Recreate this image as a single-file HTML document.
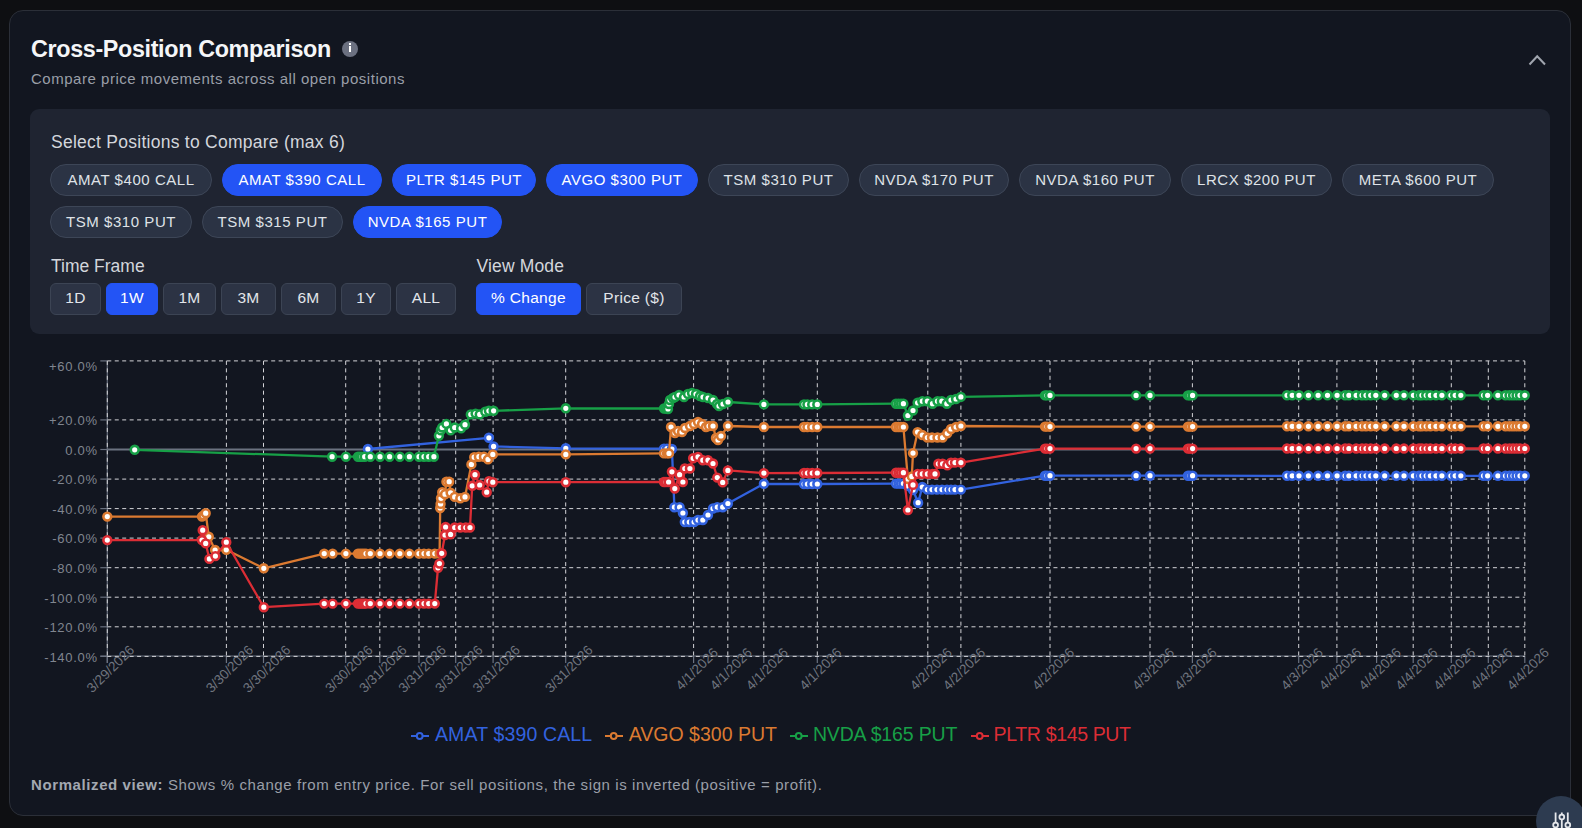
<!DOCTYPE html>
<html><head><meta charset="utf-8">
<style>
*{box-sizing:border-box;margin:0;padding:0}
html,body{width:1582px;height:828px;overflow:hidden;background:#0e0f12;font-family:"Liberation Sans",sans-serif}
.card{position:absolute;left:9px;top:10px;width:1562px;height:806px;background:#121620;border:1px solid #2b2f38;border-radius:14px}
.title{position:absolute;left:31px;top:34px;font-size:23.3px;font-weight:bold;color:#f5f6f8;letter-spacing:-0.33px;white-space:nowrap;line-height:30px}
.info{position:absolute;left:341.7px;top:40.7px;width:16.6px;height:16.6px;border-radius:50%;background:#6b7080}
.info:before{content:"";position:absolute;left:7.3px;top:2.1px;width:2px;height:2px;background:#fff}
.info:after{content:"";position:absolute;left:7.3px;top:5.3px;width:2px;height:6.2px;background:#fff}
.sub{position:absolute;left:31px;top:69px;font-size:15px;color:#9a9fa8;letter-spacing:0.52px;white-space:nowrap;line-height:20px}
.chev{position:absolute;left:1527px;top:52px}
.panel{position:absolute;left:30px;top:109px;width:1520px;height:225px;background:#1f2431;border-radius:9px}
.lbl{position:absolute;font-size:17.5px;color:#d3d6dc;letter-spacing:0.26px;white-space:nowrap;line-height:22px}
.chip{position:absolute;border-radius:16px;background:#2b3344;border:1px solid #3d4657;color:#dfe2e7;font-size:15px;letter-spacing:0.55px;
  display:flex;align-items:center;justify-content:center;white-space:nowrap;padding-bottom:2px}
.chip.sel{background:#2354f5;border-color:#2354f5;color:#fff}
.btn{position:absolute;border-radius:6px;background:#2c3344;border:1px solid #3c4454;color:#e2e5ea;font-size:15.5px;letter-spacing:0.3px;
  display:flex;align-items:center;justify-content:center;white-space:nowrap;padding-bottom:2px}
.btn.sel{background:#2354f5;border-color:#2354f5;color:#fff}
.chart{position:absolute;left:0;top:0}
.li{position:absolute;top:728.8px}
.lt{position:absolute;top:721.8px;font-size:19.5px;line-height:24px;white-space:nowrap}
.foot{position:absolute;left:31px;top:775px;font-size:15px;color:#9a9fa8;letter-spacing:0.6px;white-space:nowrap;line-height:20px}
.foot b{color:#a3a8b1}
.fab{position:absolute;left:1536px;top:796px;width:50px;height:50px;border-radius:50%;background:#2d3b50}
</style></head><body>
<div class="card"></div>
<div class="title">Cross-Position Comparison</div>
<div class="info"></div>
<div class="sub">Compare price movements across all open positions</div>
<svg class="chev" width="22" height="16" viewBox="0 0 22 16"><polyline points="2.5,12.5 10.2,4.2 18,12.5" fill="none" stroke="#a0a5ae" stroke-width="2"/></svg>
<div class="panel"></div>
<div class="lbl" style="left:51px;top:131px">Select Positions to Compare (max 6)</div>
<div class="chip" style="left:50px;top:164px;width:162px;height:32px">AMAT &#36;400 CALL</div><div class="chip sel" style="left:222px;top:164px;width:160px;height:32px">AMAT &#36;390 CALL</div><div class="chip sel" style="left:392px;top:164px;width:144px;height:32px">PLTR &#36;145 PUT</div><div class="chip sel" style="left:546px;top:164px;width:152px;height:32px">AVGO &#36;300 PUT</div><div class="chip" style="left:708px;top:164px;width:141px;height:32px">TSM &#36;310 PUT</div><div class="chip" style="left:859px;top:164px;width:150px;height:32px">NVDA &#36;170 PUT</div><div class="chip" style="left:1019px;top:164px;width:152px;height:32px">NVDA &#36;160 PUT</div><div class="chip" style="left:1181px;top:164px;width:151px;height:32px">LRCX &#36;200 PUT</div><div class="chip" style="left:1342px;top:164px;width:152px;height:32px">META &#36;600 PUT</div>
<div class="chip" style="left:50px;top:206px;width:142px;height:32px">TSM &#36;310 PUT</div><div class="chip" style="left:202px;top:206px;width:141px;height:32px">TSM &#36;315 PUT</div><div class="chip sel" style="left:353px;top:206px;width:149px;height:32px">NVDA &#36;165 PUT</div>
<div class="lbl" style="left:51px;top:254.7px;letter-spacing:0px">Time Frame</div>
<div class="lbl" style="left:476.5px;top:254.7px;letter-spacing:0.15px">View Mode</div>
<div class="btn" style="left:50px;top:283px;width:51px;height:32px">1D</div><div class="btn sel" style="left:106px;top:283px;width:52px;height:32px">1W</div><div class="btn" style="left:163px;top:283px;width:53px;height:32px">1M</div><div class="btn" style="left:221px;top:283px;width:55px;height:32px">3M</div><div class="btn" style="left:281px;top:283px;width:55px;height:32px">6M</div><div class="btn" style="left:341px;top:283px;width:50px;height:32px">1Y</div><div class="btn" style="left:396px;top:283px;width:60px;height:32px">ALL</div><div class="btn sel" style="left:476px;top:283px;width:105px;height:32px">% Change</div><div class="btn" style="left:586px;top:283px;width:96px;height:32px">Price (&#36;)</div>
<svg class="chart" width="1582" height="828" viewBox="0 0 1582 828"><g stroke="#6b7280" stroke-width="1.2"><line x1="107.3" y1="360.9" x2="107.3" y2="663.0"/><line x1="100.3" y1="656.0" x2="1524.8" y2="656.0"/><line x1="100.3" y1="360.9" x2="107.3" y2="360.9"/><line x1="100.3" y1="419.9" x2="107.3" y2="419.9"/><line x1="100.3" y1="479.1" x2="107.3" y2="479.1"/><line x1="100.3" y1="508.6" x2="107.3" y2="508.6"/><line x1="100.3" y1="538.1" x2="107.3" y2="538.1"/><line x1="100.3" y1="567.7" x2="107.3" y2="567.7"/><line x1="100.3" y1="597.2" x2="107.3" y2="597.2"/><line x1="100.3" y1="626.8" x2="107.3" y2="626.8"/><line x1="100.3" y1="656.4" x2="107.3" y2="656.4"/><line x1="100.3" y1="449.5" x2="107.3" y2="449.5"/><line x1="107.3" y1="656.0" x2="107.3" y2="663.0"/><line x1="226.4" y1="656.0" x2="226.4" y2="663.0"/><line x1="263.5" y1="656.0" x2="263.5" y2="663.0"/><line x1="345.7" y1="656.0" x2="345.7" y2="663.0"/><line x1="379.8" y1="656.0" x2="379.8" y2="663.0"/><line x1="419.0" y1="656.0" x2="419.0" y2="663.0"/><line x1="455.7" y1="656.0" x2="455.7" y2="663.0"/><line x1="493.1" y1="656.0" x2="493.1" y2="663.0"/><line x1="565.7" y1="656.0" x2="565.7" y2="663.0"/><line x1="693.6" y1="656.0" x2="693.6" y2="663.0"/><line x1="727.8" y1="656.0" x2="727.8" y2="663.0"/><line x1="763.8" y1="656.0" x2="763.8" y2="663.0"/><line x1="817.3" y1="656.0" x2="817.3" y2="663.0"/><line x1="927.8" y1="656.0" x2="927.8" y2="663.0"/><line x1="960.9" y1="656.0" x2="960.9" y2="663.0"/><line x1="1050.0" y1="656.0" x2="1050.0" y2="663.0"/><line x1="1150.0" y1="656.0" x2="1150.0" y2="663.0"/><line x1="1192.4" y1="656.0" x2="1192.4" y2="663.0"/><line x1="1298.7" y1="656.0" x2="1298.7" y2="663.0"/><line x1="1336.9" y1="656.0" x2="1336.9" y2="663.0"/><line x1="1376.6" y1="656.0" x2="1376.6" y2="663.0"/><line x1="1413.2" y1="656.0" x2="1413.2" y2="663.0"/><line x1="1451.3" y1="656.0" x2="1451.3" y2="663.0"/><line x1="1488.3" y1="656.0" x2="1488.3" y2="663.0"/><line x1="1524.8" y1="656.0" x2="1524.8" y2="663.0"/></g><g stroke="#d4d4d8" stroke-width="1" stroke-dasharray="4 3.45"><line x1="107.3" y1="360.9" x2="1524.8" y2="360.9"/><line x1="107.3" y1="419.9" x2="1524.8" y2="419.9"/><line x1="107.3" y1="479.1" x2="1524.8" y2="479.1"/><line x1="107.3" y1="508.6" x2="1524.8" y2="508.6"/><line x1="107.3" y1="538.1" x2="1524.8" y2="538.1"/><line x1="107.3" y1="567.7" x2="1524.8" y2="567.7"/><line x1="107.3" y1="597.2" x2="1524.8" y2="597.2"/><line x1="107.3" y1="626.8" x2="1524.8" y2="626.8"/><line x1="107.3" y1="656.4" x2="1524.8" y2="656.4"/><line x1="107.3" y1="360.9" x2="107.3" y2="656.0"/><line x1="226.4" y1="360.9" x2="226.4" y2="656.0"/><line x1="263.5" y1="360.9" x2="263.5" y2="656.0"/><line x1="345.7" y1="360.9" x2="345.7" y2="656.0"/><line x1="379.8" y1="360.9" x2="379.8" y2="656.0"/><line x1="419.0" y1="360.9" x2="419.0" y2="656.0"/><line x1="455.7" y1="360.9" x2="455.7" y2="656.0"/><line x1="493.1" y1="360.9" x2="493.1" y2="656.0"/><line x1="565.7" y1="360.9" x2="565.7" y2="656.0"/><line x1="693.6" y1="360.9" x2="693.6" y2="656.0"/><line x1="727.8" y1="360.9" x2="727.8" y2="656.0"/><line x1="763.8" y1="360.9" x2="763.8" y2="656.0"/><line x1="817.3" y1="360.9" x2="817.3" y2="656.0"/><line x1="927.8" y1="360.9" x2="927.8" y2="656.0"/><line x1="960.9" y1="360.9" x2="960.9" y2="656.0"/><line x1="1050.0" y1="360.9" x2="1050.0" y2="656.0"/><line x1="1150.0" y1="360.9" x2="1150.0" y2="656.0"/><line x1="1192.4" y1="360.9" x2="1192.4" y2="656.0"/><line x1="1298.7" y1="360.9" x2="1298.7" y2="656.0"/><line x1="1336.9" y1="360.9" x2="1336.9" y2="656.0"/><line x1="1376.6" y1="360.9" x2="1376.6" y2="656.0"/><line x1="1413.2" y1="360.9" x2="1413.2" y2="656.0"/><line x1="1451.3" y1="360.9" x2="1451.3" y2="656.0"/><line x1="1488.3" y1="360.9" x2="1488.3" y2="656.0"/><line x1="1524.8" y1="360.9" x2="1524.8" y2="656.0"/></g><line x1="107.3" y1="449.5" x2="1524.8" y2="449.5" stroke="#6b7280" stroke-width="2"/><g fill="#80858f" font-size="13" letter-spacing="0.7" font-family="Liberation Sans, sans-serif"><text x="97.7" y="370.7" text-anchor="end">+60.0%</text><text x="97.7" y="425.2" text-anchor="end">+20.0%</text><text x="97.7" y="454.8" text-anchor="end">0.0%</text><text x="97.7" y="484.4" text-anchor="end">-20.0%</text><text x="97.7" y="513.9" text-anchor="end">-40.0%</text><text x="97.7" y="543.4" text-anchor="end">-60.0%</text><text x="97.7" y="573.0" text-anchor="end">-80.0%</text><text x="97.7" y="602.5" text-anchor="end">-100.0%</text><text x="97.7" y="632.1" text-anchor="end">-120.0%</text><text x="97.7" y="661.6" text-anchor="end">-140.0%</text></g><g fill="#6f747e" font-size="13.6" font-family="Liberation Sans, sans-serif"><text x="110.9" y="673.4" text-anchor="middle" transform="rotate(-45 110.9 669.4)">3/29/2026</text><text x="230.0" y="673.4" text-anchor="middle" transform="rotate(-45 230.0 669.4)">3/30/2026</text><text x="267.1" y="673.4" text-anchor="middle" transform="rotate(-45 267.1 669.4)">3/30/2026</text><text x="349.3" y="673.4" text-anchor="middle" transform="rotate(-45 349.3 669.4)">3/30/2026</text><text x="383.4" y="673.4" text-anchor="middle" transform="rotate(-45 383.4 669.4)">3/31/2026</text><text x="422.6" y="673.4" text-anchor="middle" transform="rotate(-45 422.6 669.4)">3/31/2026</text><text x="459.3" y="673.4" text-anchor="middle" transform="rotate(-45 459.3 669.4)">3/31/2026</text><text x="496.7" y="673.4" text-anchor="middle" transform="rotate(-45 496.7 669.4)">3/31/2026</text><text x="569.3" y="673.4" text-anchor="middle" transform="rotate(-45 569.3 669.4)">3/31/2026</text><text x="697.2" y="673.4" text-anchor="middle" transform="rotate(-45 697.2 669.4)">4/1/2026</text><text x="731.4" y="673.4" text-anchor="middle" transform="rotate(-45 731.4 669.4)">4/1/2026</text><text x="767.4" y="673.4" text-anchor="middle" transform="rotate(-45 767.4 669.4)">4/1/2026</text><text x="820.9" y="673.4" text-anchor="middle" transform="rotate(-45 820.9 669.4)">4/1/2026</text><text x="931.4" y="673.4" text-anchor="middle" transform="rotate(-45 931.4 669.4)">4/2/2026</text><text x="964.5" y="673.4" text-anchor="middle" transform="rotate(-45 964.5 669.4)">4/2/2026</text><text x="1053.6" y="673.4" text-anchor="middle" transform="rotate(-45 1053.6 669.4)">4/2/2026</text><text x="1153.6" y="673.4" text-anchor="middle" transform="rotate(-45 1153.6 669.4)">4/3/2026</text><text x="1196.0" y="673.4" text-anchor="middle" transform="rotate(-45 1196.0 669.4)">4/3/2026</text><text x="1302.3" y="673.4" text-anchor="middle" transform="rotate(-45 1302.3 669.4)">4/3/2026</text><text x="1340.5" y="673.4" text-anchor="middle" transform="rotate(-45 1340.5 669.4)">4/4/2026</text><text x="1380.2" y="673.4" text-anchor="middle" transform="rotate(-45 1380.2 669.4)">4/4/2026</text><text x="1416.8" y="673.4" text-anchor="middle" transform="rotate(-45 1416.8 669.4)">4/4/2026</text><text x="1454.9" y="673.4" text-anchor="middle" transform="rotate(-45 1454.9 669.4)">4/4/2026</text><text x="1491.9" y="673.4" text-anchor="middle" transform="rotate(-45 1491.9 669.4)">4/4/2026</text><text x="1528.4" y="673.4" text-anchor="middle" transform="rotate(-45 1528.4 669.4)">4/4/2026</text></g><path d="M367.9,449.0 L488.9,437.8 L493.6,446.4 L565.8,448.3 L664.0,448.6 L667.0,448.6 L671.9,449.0 L674.4,507.2 L679.6,507.2 L682.9,513.0 L684.8,522.0 L689.3,522.0 L694.1,522.0 L698.0,520.0 L702.8,520.0 L708.0,515.0 L713.0,508.5 L717.3,507.2 L722.7,507.2 L727.9,503.5 L763.9,483.8 L804.0,484.0 L807.4,484.0 L812.2,484.0 L817.3,484.0 L896.0,483.6 L898.5,483.6 L901.0,483.6 L903.4,483.6 L907.9,486.0 L913.0,490.0 L918.1,502.7 L922.3,487.0 L927.4,489.6 L932.0,489.6 L937.0,489.6 L942.0,489.6 L947.0,489.6 L951.0,489.6 L955.0,489.6 L960.9,489.6 L1045.0,475.7 L1047.0,475.7 L1050.0,475.7 L1136.1,475.7 L1150.0,475.7 L1188.0,475.7 L1190.0,475.7 L1192.6,475.7 L1287.0,475.8 L1292.2,475.8 L1299.0,475.8 L1308.4,475.8 L1318.1,475.8 L1327.5,475.8 L1337.1,475.8 L1345.1,475.8 L1348.9,475.8 L1356.2,475.8 L1362.0,475.8 L1366.0,475.8 L1370.7,475.8 L1375.8,475.8 L1384.7,475.8 L1396.3,475.8 L1404.0,475.8 L1413.4,475.8 L1419.0,475.8 L1421.9,475.8 L1426.2,475.8 L1430.4,475.8 L1436.0,475.8 L1441.9,475.8 L1450.9,475.8 L1455.2,475.8 L1460.8,475.8 L1483.5,475.8 L1487.6,475.8 L1497.9,475.8 L1505.5,475.8 L1509.5,475.8 L1513.0,475.8 L1516.5,475.8 L1520.0,475.8 L1524.8,475.8" fill="none" stroke="#3262df" stroke-width="2.3" stroke-linejoin="round"/><g fill="#ffffff" stroke="#3262df" stroke-width="2.6"><circle cx="367.9" cy="449.0" r="3.9"/><circle cx="488.9" cy="437.8" r="3.9"/><circle cx="493.6" cy="446.4" r="3.9"/><circle cx="565.8" cy="448.3" r="3.9"/><circle cx="664.0" cy="448.6" r="3.9"/><circle cx="667.0" cy="448.6" r="3.9"/><circle cx="671.9" cy="449.0" r="3.9"/><circle cx="674.4" cy="507.2" r="3.9"/><circle cx="679.6" cy="507.2" r="3.9"/><circle cx="682.9" cy="513.0" r="3.9"/><circle cx="684.8" cy="522.0" r="3.9"/><circle cx="689.3" cy="522.0" r="3.9"/><circle cx="694.1" cy="522.0" r="3.9"/><circle cx="698.0" cy="520.0" r="3.9"/><circle cx="702.8" cy="520.0" r="3.9"/><circle cx="708.0" cy="515.0" r="3.9"/><circle cx="713.0" cy="508.5" r="3.9"/><circle cx="717.3" cy="507.2" r="3.9"/><circle cx="722.7" cy="507.2" r="3.9"/><circle cx="727.9" cy="503.5" r="3.9"/><circle cx="763.9" cy="483.8" r="3.9"/><circle cx="804.0" cy="484.0" r="3.9"/><circle cx="807.4" cy="484.0" r="3.9"/><circle cx="812.2" cy="484.0" r="3.9"/><circle cx="817.3" cy="484.0" r="3.9"/><circle cx="896.0" cy="483.6" r="3.9"/><circle cx="898.5" cy="483.6" r="3.9"/><circle cx="901.0" cy="483.6" r="3.9"/><circle cx="903.4" cy="483.6" r="3.9"/><circle cx="907.9" cy="486.0" r="3.9"/><circle cx="913.0" cy="490.0" r="3.9"/><circle cx="918.1" cy="502.7" r="3.9"/><circle cx="922.3" cy="487.0" r="3.9"/><circle cx="927.4" cy="489.6" r="3.9"/><circle cx="932.0" cy="489.6" r="3.9"/><circle cx="937.0" cy="489.6" r="3.9"/><circle cx="942.0" cy="489.6" r="3.9"/><circle cx="947.0" cy="489.6" r="3.9"/><circle cx="951.0" cy="489.6" r="3.9"/><circle cx="955.0" cy="489.6" r="3.9"/><circle cx="960.9" cy="489.6" r="3.9"/><circle cx="1045.0" cy="475.7" r="3.9"/><circle cx="1047.0" cy="475.7" r="3.9"/><circle cx="1050.0" cy="475.7" r="3.9"/><circle cx="1136.1" cy="475.7" r="3.9"/><circle cx="1150.0" cy="475.7" r="3.9"/><circle cx="1188.0" cy="475.7" r="3.9"/><circle cx="1190.0" cy="475.7" r="3.9"/><circle cx="1192.6" cy="475.7" r="3.9"/><circle cx="1287.0" cy="475.8" r="3.9"/><circle cx="1292.2" cy="475.8" r="3.9"/><circle cx="1299.0" cy="475.8" r="3.9"/><circle cx="1308.4" cy="475.8" r="3.9"/><circle cx="1318.1" cy="475.8" r="3.9"/><circle cx="1327.5" cy="475.8" r="3.9"/><circle cx="1337.1" cy="475.8" r="3.9"/><circle cx="1345.1" cy="475.8" r="3.9"/><circle cx="1348.9" cy="475.8" r="3.9"/><circle cx="1356.2" cy="475.8" r="3.9"/><circle cx="1362.0" cy="475.8" r="3.9"/><circle cx="1366.0" cy="475.8" r="3.9"/><circle cx="1370.7" cy="475.8" r="3.9"/><circle cx="1375.8" cy="475.8" r="3.9"/><circle cx="1384.7" cy="475.8" r="3.9"/><circle cx="1396.3" cy="475.8" r="3.9"/><circle cx="1404.0" cy="475.8" r="3.9"/><circle cx="1413.4" cy="475.8" r="3.9"/><circle cx="1419.0" cy="475.8" r="3.9"/><circle cx="1421.9" cy="475.8" r="3.9"/><circle cx="1426.2" cy="475.8" r="3.9"/><circle cx="1430.4" cy="475.8" r="3.9"/><circle cx="1436.0" cy="475.8" r="3.9"/><circle cx="1441.9" cy="475.8" r="3.9"/><circle cx="1450.9" cy="475.8" r="3.9"/><circle cx="1455.2" cy="475.8" r="3.9"/><circle cx="1460.8" cy="475.8" r="3.9"/><circle cx="1483.5" cy="475.8" r="3.9"/><circle cx="1487.6" cy="475.8" r="3.9"/><circle cx="1497.9" cy="475.8" r="3.9"/><circle cx="1505.5" cy="475.8" r="3.9"/><circle cx="1509.5" cy="475.8" r="3.9"/><circle cx="1513.0" cy="475.8" r="3.9"/><circle cx="1516.5" cy="475.8" r="3.9"/><circle cx="1520.0" cy="475.8" r="3.9"/><circle cx="1524.8" cy="475.8" r="3.9"/></g><path d="M107.3,516.6 L202.0,516.6 L203.5,515.5 L205.7,513.2 L208.8,536.8 L215.1,550.0 L226.3,549.8 L263.8,568.3 L324.2,553.6 L332.6,553.6 L345.9,553.6 L358.0,553.6 L360.0,553.6 L362.0,553.6 L364.0,553.6 L366.0,553.6 L370.3,553.6 L380.0,553.6 L389.6,553.6 L399.8,553.6 L409.4,553.6 L419.0,553.6 L424.0,553.6 L428.7,553.6 L434.8,553.6 L439.6,553.6 L440.2,508.0 L440.6,503.9 L441.0,498.3 L442.2,492.2 L445.0,494.2 L446.4,481.7 L449.2,481.7 L450.6,492.8 L454.7,496.9 L460.3,498.3 L465.0,496.9 L471.4,464.4 L474.2,457.2 L478.9,456.7 L483.9,456.7 L488.0,459.4 L492.8,454.4 L565.8,454.4 L664.0,453.4 L667.0,453.4 L669.0,453.4 L671.0,427.0 L675.0,433.0 L678.0,431.0 L682.0,432.0 L685.0,428.0 L690.0,426.0 L694.0,424.0 L698.0,422.0 L702.0,424.0 L706.0,427.0 L709.0,426.0 L713.0,426.0 L716.0,438.0 L718.0,440.0 L721.0,436.0 L728.0,426.0 L763.9,427.0 L804.0,427.0 L807.4,427.0 L812.2,427.0 L817.3,427.0 L896.0,427.0 L898.5,427.0 L901.0,427.0 L903.4,427.0 L907.9,479.0 L911.8,476.4 L913.0,453.1 L917.6,432.1 L922.3,435.0 L927.4,437.5 L932.0,437.5 L937.5,437.5 L942.6,437.5 L947.3,433.3 L951.0,429.0 L956.1,427.0 L960.9,426.0 L1045.0,426.6 L1047.0,426.6 L1050.0,426.6 L1136.1,426.6 L1150.0,426.6 L1188.0,426.6 L1190.0,426.6 L1192.6,426.6 L1287.0,426.3 L1292.2,426.3 L1299.0,426.3 L1308.4,426.3 L1318.1,426.3 L1327.5,426.3 L1337.1,426.3 L1345.1,426.3 L1348.9,426.3 L1356.2,426.3 L1362.0,426.3 L1366.0,426.3 L1370.7,426.3 L1375.8,426.3 L1384.7,426.3 L1396.3,426.3 L1404.0,426.3 L1413.4,426.3 L1419.0,426.3 L1421.9,426.3 L1426.2,426.3 L1430.4,426.3 L1436.0,426.3 L1441.9,426.3 L1450.9,426.3 L1455.2,426.3 L1460.8,426.3 L1483.5,426.3 L1487.6,426.3 L1497.9,426.3 L1505.5,426.3 L1509.5,426.3 L1513.0,426.3 L1516.5,426.3 L1520.0,426.3 L1524.8,426.3" fill="none" stroke="#db7a31" stroke-width="2.3" stroke-linejoin="round"/><g fill="#ffffff" stroke="#db7a31" stroke-width="2.6"><circle cx="107.3" cy="516.6" r="3.9"/><circle cx="202.0" cy="516.6" r="3.9"/><circle cx="203.5" cy="515.5" r="3.9"/><circle cx="205.7" cy="513.2" r="3.9"/><circle cx="208.8" cy="536.8" r="3.9"/><circle cx="215.1" cy="550.0" r="3.9"/><circle cx="226.3" cy="549.8" r="3.9"/><circle cx="263.8" cy="568.3" r="3.9"/><circle cx="324.2" cy="553.6" r="3.9"/><circle cx="332.6" cy="553.6" r="3.9"/><circle cx="345.9" cy="553.6" r="3.9"/><circle cx="358.0" cy="553.6" r="3.9"/><circle cx="360.0" cy="553.6" r="3.9"/><circle cx="362.0" cy="553.6" r="3.9"/><circle cx="364.0" cy="553.6" r="3.9"/><circle cx="366.0" cy="553.6" r="3.9"/><circle cx="370.3" cy="553.6" r="3.9"/><circle cx="380.0" cy="553.6" r="3.9"/><circle cx="389.6" cy="553.6" r="3.9"/><circle cx="399.8" cy="553.6" r="3.9"/><circle cx="409.4" cy="553.6" r="3.9"/><circle cx="419.0" cy="553.6" r="3.9"/><circle cx="424.0" cy="553.6" r="3.9"/><circle cx="428.7" cy="553.6" r="3.9"/><circle cx="434.8" cy="553.6" r="3.9"/><circle cx="439.6" cy="553.6" r="3.9"/><circle cx="440.2" cy="508.0" r="3.9"/><circle cx="440.6" cy="503.9" r="3.9"/><circle cx="441.0" cy="498.3" r="3.9"/><circle cx="442.2" cy="492.2" r="3.9"/><circle cx="445.0" cy="494.2" r="3.9"/><circle cx="446.4" cy="481.7" r="3.9"/><circle cx="449.2" cy="481.7" r="3.9"/><circle cx="450.6" cy="492.8" r="3.9"/><circle cx="454.7" cy="496.9" r="3.9"/><circle cx="460.3" cy="498.3" r="3.9"/><circle cx="465.0" cy="496.9" r="3.9"/><circle cx="471.4" cy="464.4" r="3.9"/><circle cx="474.2" cy="457.2" r="3.9"/><circle cx="478.9" cy="456.7" r="3.9"/><circle cx="483.9" cy="456.7" r="3.9"/><circle cx="488.0" cy="459.4" r="3.9"/><circle cx="492.8" cy="454.4" r="3.9"/><circle cx="565.8" cy="454.4" r="3.9"/><circle cx="664.0" cy="453.4" r="3.9"/><circle cx="667.0" cy="453.4" r="3.9"/><circle cx="669.0" cy="453.4" r="3.9"/><circle cx="671.0" cy="427.0" r="3.9"/><circle cx="675.0" cy="433.0" r="3.9"/><circle cx="678.0" cy="431.0" r="3.9"/><circle cx="682.0" cy="432.0" r="3.9"/><circle cx="685.0" cy="428.0" r="3.9"/><circle cx="690.0" cy="426.0" r="3.9"/><circle cx="694.0" cy="424.0" r="3.9"/><circle cx="698.0" cy="422.0" r="3.9"/><circle cx="702.0" cy="424.0" r="3.9"/><circle cx="706.0" cy="427.0" r="3.9"/><circle cx="709.0" cy="426.0" r="3.9"/><circle cx="713.0" cy="426.0" r="3.9"/><circle cx="716.0" cy="438.0" r="3.9"/><circle cx="718.0" cy="440.0" r="3.9"/><circle cx="721.0" cy="436.0" r="3.9"/><circle cx="728.0" cy="426.0" r="3.9"/><circle cx="763.9" cy="427.0" r="3.9"/><circle cx="804.0" cy="427.0" r="3.9"/><circle cx="807.4" cy="427.0" r="3.9"/><circle cx="812.2" cy="427.0" r="3.9"/><circle cx="817.3" cy="427.0" r="3.9"/><circle cx="896.0" cy="427.0" r="3.9"/><circle cx="898.5" cy="427.0" r="3.9"/><circle cx="901.0" cy="427.0" r="3.9"/><circle cx="903.4" cy="427.0" r="3.9"/><circle cx="907.9" cy="479.0" r="3.9"/><circle cx="911.8" cy="476.4" r="3.9"/><circle cx="913.0" cy="453.1" r="3.9"/><circle cx="917.6" cy="432.1" r="3.9"/><circle cx="922.3" cy="435.0" r="3.9"/><circle cx="927.4" cy="437.5" r="3.9"/><circle cx="932.0" cy="437.5" r="3.9"/><circle cx="937.5" cy="437.5" r="3.9"/><circle cx="942.6" cy="437.5" r="3.9"/><circle cx="947.3" cy="433.3" r="3.9"/><circle cx="951.0" cy="429.0" r="3.9"/><circle cx="956.1" cy="427.0" r="3.9"/><circle cx="960.9" cy="426.0" r="3.9"/><circle cx="1045.0" cy="426.6" r="3.9"/><circle cx="1047.0" cy="426.6" r="3.9"/><circle cx="1050.0" cy="426.6" r="3.9"/><circle cx="1136.1" cy="426.6" r="3.9"/><circle cx="1150.0" cy="426.6" r="3.9"/><circle cx="1188.0" cy="426.6" r="3.9"/><circle cx="1190.0" cy="426.6" r="3.9"/><circle cx="1192.6" cy="426.6" r="3.9"/><circle cx="1287.0" cy="426.3" r="3.9"/><circle cx="1292.2" cy="426.3" r="3.9"/><circle cx="1299.0" cy="426.3" r="3.9"/><circle cx="1308.4" cy="426.3" r="3.9"/><circle cx="1318.1" cy="426.3" r="3.9"/><circle cx="1327.5" cy="426.3" r="3.9"/><circle cx="1337.1" cy="426.3" r="3.9"/><circle cx="1345.1" cy="426.3" r="3.9"/><circle cx="1348.9" cy="426.3" r="3.9"/><circle cx="1356.2" cy="426.3" r="3.9"/><circle cx="1362.0" cy="426.3" r="3.9"/><circle cx="1366.0" cy="426.3" r="3.9"/><circle cx="1370.7" cy="426.3" r="3.9"/><circle cx="1375.8" cy="426.3" r="3.9"/><circle cx="1384.7" cy="426.3" r="3.9"/><circle cx="1396.3" cy="426.3" r="3.9"/><circle cx="1404.0" cy="426.3" r="3.9"/><circle cx="1413.4" cy="426.3" r="3.9"/><circle cx="1419.0" cy="426.3" r="3.9"/><circle cx="1421.9" cy="426.3" r="3.9"/><circle cx="1426.2" cy="426.3" r="3.9"/><circle cx="1430.4" cy="426.3" r="3.9"/><circle cx="1436.0" cy="426.3" r="3.9"/><circle cx="1441.9" cy="426.3" r="3.9"/><circle cx="1450.9" cy="426.3" r="3.9"/><circle cx="1455.2" cy="426.3" r="3.9"/><circle cx="1460.8" cy="426.3" r="3.9"/><circle cx="1483.5" cy="426.3" r="3.9"/><circle cx="1487.6" cy="426.3" r="3.9"/><circle cx="1497.9" cy="426.3" r="3.9"/><circle cx="1505.5" cy="426.3" r="3.9"/><circle cx="1509.5" cy="426.3" r="3.9"/><circle cx="1513.0" cy="426.3" r="3.9"/><circle cx="1516.5" cy="426.3" r="3.9"/><circle cx="1520.0" cy="426.3" r="3.9"/><circle cx="1524.8" cy="426.3" r="3.9"/></g><path d="M134.7,449.8 L332.1,456.7 L345.9,456.7 L358.0,456.7 L360.0,456.7 L362.0,456.7 L364.7,456.7 L370.3,456.7 L380.0,456.7 L389.6,456.7 L399.8,456.7 L409.4,456.7 L419.0,456.7 L424.0,456.7 L428.7,456.7 L433.9,456.7 L438.9,435.8 L440.8,430.3 L442.2,427.5 L446.4,423.9 L450.6,430.3 L454.7,427.5 L461.1,428.3 L465.0,424.7 L470.8,414.4 L475.6,413.6 L479.7,414.4 L485.3,411.7 L488.9,410.8 L493.6,410.8 L565.8,408.3 L664.0,408.5 L666.0,408.5 L668.0,409.0 L669.0,404.0 L670.0,400.0 L673.0,398.0 L675.0,397.0 L679.0,395.0 L684.0,397.0 L688.0,394.0 L692.0,393.0 L696.0,394.0 L700.0,396.0 L703.0,397.0 L708.0,398.0 L713.0,400.0 L717.0,404.0 L719.0,406.0 L723.0,404.0 L728.0,402.0 L763.9,404.4 L804.0,404.4 L807.4,404.4 L812.2,404.4 L817.3,404.4 L896.0,403.7 L898.5,403.7 L901.0,403.7 L903.4,403.7 L907.9,415.5 L913.0,410.5 L917.6,402.8 L922.3,401.2 L927.4,401.2 L932.5,403.7 L937.5,401.2 L941.8,401.2 L946.8,403.7 L951.0,400.0 L956.0,399.0 L960.9,396.9 L1045.0,395.4 L1047.0,395.4 L1050.0,395.4 L1136.1,395.4 L1150.0,395.4 L1188.0,395.4 L1190.0,395.4 L1192.6,395.4 L1287.0,395.3 L1292.2,395.3 L1299.0,395.3 L1308.4,395.3 L1318.1,395.3 L1327.5,395.3 L1337.1,395.3 L1345.1,395.3 L1348.9,395.3 L1356.2,395.3 L1362.0,395.3 L1366.0,395.3 L1370.7,395.3 L1375.8,395.3 L1384.7,395.3 L1396.3,395.3 L1404.0,395.3 L1413.4,395.3 L1419.0,395.3 L1421.9,395.3 L1426.2,395.3 L1430.4,395.3 L1436.0,395.3 L1441.9,395.3 L1450.9,395.3 L1455.2,395.3 L1460.8,395.3 L1483.5,395.3 L1487.6,395.3 L1497.9,395.3 L1505.5,395.3 L1509.5,395.3 L1513.0,395.3 L1516.5,395.3 L1520.0,395.3 L1524.8,395.3" fill="none" stroke="#17a047" stroke-width="2.3" stroke-linejoin="round"/><g fill="#ffffff" stroke="#17a047" stroke-width="2.6"><circle cx="134.7" cy="449.8" r="3.9"/><circle cx="332.1" cy="456.7" r="3.9"/><circle cx="345.9" cy="456.7" r="3.9"/><circle cx="358.0" cy="456.7" r="3.9"/><circle cx="360.0" cy="456.7" r="3.9"/><circle cx="362.0" cy="456.7" r="3.9"/><circle cx="364.7" cy="456.7" r="3.9"/><circle cx="370.3" cy="456.7" r="3.9"/><circle cx="380.0" cy="456.7" r="3.9"/><circle cx="389.6" cy="456.7" r="3.9"/><circle cx="399.8" cy="456.7" r="3.9"/><circle cx="409.4" cy="456.7" r="3.9"/><circle cx="419.0" cy="456.7" r="3.9"/><circle cx="424.0" cy="456.7" r="3.9"/><circle cx="428.7" cy="456.7" r="3.9"/><circle cx="433.9" cy="456.7" r="3.9"/><circle cx="438.9" cy="435.8" r="3.9"/><circle cx="440.8" cy="430.3" r="3.9"/><circle cx="442.2" cy="427.5" r="3.9"/><circle cx="446.4" cy="423.9" r="3.9"/><circle cx="450.6" cy="430.3" r="3.9"/><circle cx="454.7" cy="427.5" r="3.9"/><circle cx="461.1" cy="428.3" r="3.9"/><circle cx="465.0" cy="424.7" r="3.9"/><circle cx="470.8" cy="414.4" r="3.9"/><circle cx="475.6" cy="413.6" r="3.9"/><circle cx="479.7" cy="414.4" r="3.9"/><circle cx="485.3" cy="411.7" r="3.9"/><circle cx="488.9" cy="410.8" r="3.9"/><circle cx="493.6" cy="410.8" r="3.9"/><circle cx="565.8" cy="408.3" r="3.9"/><circle cx="664.0" cy="408.5" r="3.9"/><circle cx="666.0" cy="408.5" r="3.9"/><circle cx="668.0" cy="409.0" r="3.9"/><circle cx="669.0" cy="404.0" r="3.9"/><circle cx="670.0" cy="400.0" r="3.9"/><circle cx="673.0" cy="398.0" r="3.9"/><circle cx="675.0" cy="397.0" r="3.9"/><circle cx="679.0" cy="395.0" r="3.9"/><circle cx="684.0" cy="397.0" r="3.9"/><circle cx="688.0" cy="394.0" r="3.9"/><circle cx="692.0" cy="393.0" r="3.9"/><circle cx="696.0" cy="394.0" r="3.9"/><circle cx="700.0" cy="396.0" r="3.9"/><circle cx="703.0" cy="397.0" r="3.9"/><circle cx="708.0" cy="398.0" r="3.9"/><circle cx="713.0" cy="400.0" r="3.9"/><circle cx="717.0" cy="404.0" r="3.9"/><circle cx="719.0" cy="406.0" r="3.9"/><circle cx="723.0" cy="404.0" r="3.9"/><circle cx="728.0" cy="402.0" r="3.9"/><circle cx="763.9" cy="404.4" r="3.9"/><circle cx="804.0" cy="404.4" r="3.9"/><circle cx="807.4" cy="404.4" r="3.9"/><circle cx="812.2" cy="404.4" r="3.9"/><circle cx="817.3" cy="404.4" r="3.9"/><circle cx="896.0" cy="403.7" r="3.9"/><circle cx="898.5" cy="403.7" r="3.9"/><circle cx="901.0" cy="403.7" r="3.9"/><circle cx="903.4" cy="403.7" r="3.9"/><circle cx="907.9" cy="415.5" r="3.9"/><circle cx="913.0" cy="410.5" r="3.9"/><circle cx="917.6" cy="402.8" r="3.9"/><circle cx="922.3" cy="401.2" r="3.9"/><circle cx="927.4" cy="401.2" r="3.9"/><circle cx="932.5" cy="403.7" r="3.9"/><circle cx="937.5" cy="401.2" r="3.9"/><circle cx="941.8" cy="401.2" r="3.9"/><circle cx="946.8" cy="403.7" r="3.9"/><circle cx="951.0" cy="400.0" r="3.9"/><circle cx="956.0" cy="399.0" r="3.9"/><circle cx="960.9" cy="396.9" r="3.9"/><circle cx="1045.0" cy="395.4" r="3.9"/><circle cx="1047.0" cy="395.4" r="3.9"/><circle cx="1050.0" cy="395.4" r="3.9"/><circle cx="1136.1" cy="395.4" r="3.9"/><circle cx="1150.0" cy="395.4" r="3.9"/><circle cx="1188.0" cy="395.4" r="3.9"/><circle cx="1190.0" cy="395.4" r="3.9"/><circle cx="1192.6" cy="395.4" r="3.9"/><circle cx="1287.0" cy="395.3" r="3.9"/><circle cx="1292.2" cy="395.3" r="3.9"/><circle cx="1299.0" cy="395.3" r="3.9"/><circle cx="1308.4" cy="395.3" r="3.9"/><circle cx="1318.1" cy="395.3" r="3.9"/><circle cx="1327.5" cy="395.3" r="3.9"/><circle cx="1337.1" cy="395.3" r="3.9"/><circle cx="1345.1" cy="395.3" r="3.9"/><circle cx="1348.9" cy="395.3" r="3.9"/><circle cx="1356.2" cy="395.3" r="3.9"/><circle cx="1362.0" cy="395.3" r="3.9"/><circle cx="1366.0" cy="395.3" r="3.9"/><circle cx="1370.7" cy="395.3" r="3.9"/><circle cx="1375.8" cy="395.3" r="3.9"/><circle cx="1384.7" cy="395.3" r="3.9"/><circle cx="1396.3" cy="395.3" r="3.9"/><circle cx="1404.0" cy="395.3" r="3.9"/><circle cx="1413.4" cy="395.3" r="3.9"/><circle cx="1419.0" cy="395.3" r="3.9"/><circle cx="1421.9" cy="395.3" r="3.9"/><circle cx="1426.2" cy="395.3" r="3.9"/><circle cx="1430.4" cy="395.3" r="3.9"/><circle cx="1436.0" cy="395.3" r="3.9"/><circle cx="1441.9" cy="395.3" r="3.9"/><circle cx="1450.9" cy="395.3" r="3.9"/><circle cx="1455.2" cy="395.3" r="3.9"/><circle cx="1460.8" cy="395.3" r="3.9"/><circle cx="1483.5" cy="395.3" r="3.9"/><circle cx="1487.6" cy="395.3" r="3.9"/><circle cx="1497.9" cy="395.3" r="3.9"/><circle cx="1505.5" cy="395.3" r="3.9"/><circle cx="1509.5" cy="395.3" r="3.9"/><circle cx="1513.0" cy="395.3" r="3.9"/><circle cx="1516.5" cy="395.3" r="3.9"/><circle cx="1520.0" cy="395.3" r="3.9"/><circle cx="1524.8" cy="395.3" r="3.9"/></g><path d="M107.3,540.1 L202.0,540.0 L202.7,530.2 L205.7,543.4 L209.4,558.9 L215.4,556.1 L226.3,542.2 L263.8,607.2 L324.2,603.6 L332.6,603.6 L345.9,603.6 L358.0,603.6 L360.0,603.6 L362.0,603.6 L364.0,603.6 L366.0,603.6 L370.3,603.6 L380.0,603.6 L389.6,603.6 L399.8,603.6 L409.4,603.6 L419.0,603.6 L424.0,603.6 L428.7,603.6 L434.8,603.6 L438.0,567.8 L439.4,563.6 L441.7,553.3 L445.0,535.0 L445.6,527.0 L450.6,534.4 L454.7,527.5 L460.3,527.5 L465.8,527.5 L470.0,527.5 L472.2,485.8 L475.0,474.7 L479.7,485.0 L486.7,492.2 L488.9,481.1 L492.8,482.2 L565.8,482.2 L664.0,482.0 L666.0,482.0 L668.6,482.0 L671.9,471.8 L674.8,488.6 L679.6,474.7 L682.9,482.0 L684.8,468.5 L689.9,468.5 L693.1,458.3 L698.0,456.9 L702.8,460.2 L708.0,460.2 L713.0,463.5 L717.3,477.6 L722.7,482.4 L727.9,470.4 L763.9,473.1 L804.0,473.0 L807.4,473.0 L812.2,473.0 L817.3,473.0 L896.0,472.7 L898.5,472.7 L901.0,472.7 L903.4,472.7 L907.9,510.0 L913.0,484.9 L917.6,473.9 L922.3,473.9 L927.4,473.9 L932.5,473.9 L935.0,473.9 L938.4,463.8 L942.6,463.8 L947.3,465.4 L951.0,462.6 L955.0,462.6 L960.9,462.6 L1045.0,448.6 L1047.0,448.6 L1050.0,448.6 L1136.1,448.6 L1150.0,448.6 L1188.0,448.6 L1190.0,448.6 L1192.6,448.6 L1287.0,448.5 L1292.2,448.5 L1299.0,448.5 L1308.4,448.5 L1318.1,448.5 L1327.5,448.5 L1337.1,448.5 L1345.1,448.5 L1348.9,448.5 L1356.2,448.5 L1362.0,448.5 L1366.0,448.5 L1370.7,448.5 L1375.8,448.5 L1384.7,448.5 L1396.3,448.5 L1404.0,448.5 L1413.4,448.5 L1419.0,448.5 L1421.9,448.5 L1426.2,448.5 L1430.4,448.5 L1436.0,448.5 L1441.9,448.5 L1450.9,448.5 L1455.2,448.5 L1460.8,448.5 L1483.5,448.5 L1487.6,448.5 L1497.9,448.5 L1505.5,448.5 L1509.5,448.5 L1513.0,448.5 L1516.5,448.5 L1520.0,448.5 L1524.8,448.5" fill="none" stroke="#dc2d35" stroke-width="2.3" stroke-linejoin="round"/><g fill="#ffffff" stroke="#dc2d35" stroke-width="2.6"><circle cx="107.3" cy="540.1" r="3.9"/><circle cx="202.0" cy="540.0" r="3.9"/><circle cx="202.7" cy="530.2" r="3.9"/><circle cx="205.7" cy="543.4" r="3.9"/><circle cx="209.4" cy="558.9" r="3.9"/><circle cx="215.4" cy="556.1" r="3.9"/><circle cx="226.3" cy="542.2" r="3.9"/><circle cx="263.8" cy="607.2" r="3.9"/><circle cx="324.2" cy="603.6" r="3.9"/><circle cx="332.6" cy="603.6" r="3.9"/><circle cx="345.9" cy="603.6" r="3.9"/><circle cx="358.0" cy="603.6" r="3.9"/><circle cx="360.0" cy="603.6" r="3.9"/><circle cx="362.0" cy="603.6" r="3.9"/><circle cx="364.0" cy="603.6" r="3.9"/><circle cx="366.0" cy="603.6" r="3.9"/><circle cx="370.3" cy="603.6" r="3.9"/><circle cx="380.0" cy="603.6" r="3.9"/><circle cx="389.6" cy="603.6" r="3.9"/><circle cx="399.8" cy="603.6" r="3.9"/><circle cx="409.4" cy="603.6" r="3.9"/><circle cx="419.0" cy="603.6" r="3.9"/><circle cx="424.0" cy="603.6" r="3.9"/><circle cx="428.7" cy="603.6" r="3.9"/><circle cx="434.8" cy="603.6" r="3.9"/><circle cx="438.0" cy="567.8" r="3.9"/><circle cx="439.4" cy="563.6" r="3.9"/><circle cx="441.7" cy="553.3" r="3.9"/><circle cx="445.0" cy="535.0" r="3.9"/><circle cx="445.6" cy="527.0" r="3.9"/><circle cx="450.6" cy="534.4" r="3.9"/><circle cx="454.7" cy="527.5" r="3.9"/><circle cx="460.3" cy="527.5" r="3.9"/><circle cx="465.8" cy="527.5" r="3.9"/><circle cx="470.0" cy="527.5" r="3.9"/><circle cx="472.2" cy="485.8" r="3.9"/><circle cx="475.0" cy="474.7" r="3.9"/><circle cx="479.7" cy="485.0" r="3.9"/><circle cx="486.7" cy="492.2" r="3.9"/><circle cx="488.9" cy="481.1" r="3.9"/><circle cx="492.8" cy="482.2" r="3.9"/><circle cx="565.8" cy="482.2" r="3.9"/><circle cx="664.0" cy="482.0" r="3.9"/><circle cx="666.0" cy="482.0" r="3.9"/><circle cx="668.6" cy="482.0" r="3.9"/><circle cx="671.9" cy="471.8" r="3.9"/><circle cx="674.8" cy="488.6" r="3.9"/><circle cx="679.6" cy="474.7" r="3.9"/><circle cx="682.9" cy="482.0" r="3.9"/><circle cx="684.8" cy="468.5" r="3.9"/><circle cx="689.9" cy="468.5" r="3.9"/><circle cx="693.1" cy="458.3" r="3.9"/><circle cx="698.0" cy="456.9" r="3.9"/><circle cx="702.8" cy="460.2" r="3.9"/><circle cx="708.0" cy="460.2" r="3.9"/><circle cx="713.0" cy="463.5" r="3.9"/><circle cx="717.3" cy="477.6" r="3.9"/><circle cx="722.7" cy="482.4" r="3.9"/><circle cx="727.9" cy="470.4" r="3.9"/><circle cx="763.9" cy="473.1" r="3.9"/><circle cx="804.0" cy="473.0" r="3.9"/><circle cx="807.4" cy="473.0" r="3.9"/><circle cx="812.2" cy="473.0" r="3.9"/><circle cx="817.3" cy="473.0" r="3.9"/><circle cx="896.0" cy="472.7" r="3.9"/><circle cx="898.5" cy="472.7" r="3.9"/><circle cx="901.0" cy="472.7" r="3.9"/><circle cx="903.4" cy="472.7" r="3.9"/><circle cx="907.9" cy="510.0" r="3.9"/><circle cx="913.0" cy="484.9" r="3.9"/><circle cx="917.6" cy="473.9" r="3.9"/><circle cx="922.3" cy="473.9" r="3.9"/><circle cx="927.4" cy="473.9" r="3.9"/><circle cx="932.5" cy="473.9" r="3.9"/><circle cx="935.0" cy="473.9" r="3.9"/><circle cx="938.4" cy="463.8" r="3.9"/><circle cx="942.6" cy="463.8" r="3.9"/><circle cx="947.3" cy="465.4" r="3.9"/><circle cx="951.0" cy="462.6" r="3.9"/><circle cx="955.0" cy="462.6" r="3.9"/><circle cx="960.9" cy="462.6" r="3.9"/><circle cx="1045.0" cy="448.6" r="3.9"/><circle cx="1047.0" cy="448.6" r="3.9"/><circle cx="1050.0" cy="448.6" r="3.9"/><circle cx="1136.1" cy="448.6" r="3.9"/><circle cx="1150.0" cy="448.6" r="3.9"/><circle cx="1188.0" cy="448.6" r="3.9"/><circle cx="1190.0" cy="448.6" r="3.9"/><circle cx="1192.6" cy="448.6" r="3.9"/><circle cx="1287.0" cy="448.5" r="3.9"/><circle cx="1292.2" cy="448.5" r="3.9"/><circle cx="1299.0" cy="448.5" r="3.9"/><circle cx="1308.4" cy="448.5" r="3.9"/><circle cx="1318.1" cy="448.5" r="3.9"/><circle cx="1327.5" cy="448.5" r="3.9"/><circle cx="1337.1" cy="448.5" r="3.9"/><circle cx="1345.1" cy="448.5" r="3.9"/><circle cx="1348.9" cy="448.5" r="3.9"/><circle cx="1356.2" cy="448.5" r="3.9"/><circle cx="1362.0" cy="448.5" r="3.9"/><circle cx="1366.0" cy="448.5" r="3.9"/><circle cx="1370.7" cy="448.5" r="3.9"/><circle cx="1375.8" cy="448.5" r="3.9"/><circle cx="1384.7" cy="448.5" r="3.9"/><circle cx="1396.3" cy="448.5" r="3.9"/><circle cx="1404.0" cy="448.5" r="3.9"/><circle cx="1413.4" cy="448.5" r="3.9"/><circle cx="1419.0" cy="448.5" r="3.9"/><circle cx="1421.9" cy="448.5" r="3.9"/><circle cx="1426.2" cy="448.5" r="3.9"/><circle cx="1430.4" cy="448.5" r="3.9"/><circle cx="1436.0" cy="448.5" r="3.9"/><circle cx="1441.9" cy="448.5" r="3.9"/><circle cx="1450.9" cy="448.5" r="3.9"/><circle cx="1455.2" cy="448.5" r="3.9"/><circle cx="1460.8" cy="448.5" r="3.9"/><circle cx="1483.5" cy="448.5" r="3.9"/><circle cx="1487.6" cy="448.5" r="3.9"/><circle cx="1497.9" cy="448.5" r="3.9"/><circle cx="1505.5" cy="448.5" r="3.9"/><circle cx="1509.5" cy="448.5" r="3.9"/><circle cx="1513.0" cy="448.5" r="3.9"/><circle cx="1516.5" cy="448.5" r="3.9"/><circle cx="1520.0" cy="448.5" r="3.9"/><circle cx="1524.8" cy="448.5" r="3.9"/></g></svg>
<svg class="li" style="left:410.8px" width="18" height="14" viewBox="0 0 18 14"><line x1="0" y1="7" x2="18" y2="7" stroke="#3262df" stroke-width="2"/><circle cx="8.7" cy="7" r="2.9" fill="#121620" stroke="#3262df" stroke-width="2"/></svg><div class="lt" style="left:434.9px;color:#3262df;letter-spacing:0.15px">AMAT $390 CALL</div><svg class="li" style="left:605.3px" width="18" height="14" viewBox="0 0 18 14"><line x1="0" y1="7" x2="18" y2="7" stroke="#db7a31" stroke-width="2"/><circle cx="8.7" cy="7" r="2.9" fill="#121620" stroke="#db7a31" stroke-width="2"/></svg><div class="lt" style="left:628.8px;color:#db7a31;letter-spacing:0px">AVGO $300 PUT</div><svg class="li" style="left:790px" width="18" height="14" viewBox="0 0 18 14"><line x1="0" y1="7" x2="18" y2="7" stroke="#17a047" stroke-width="2"/><circle cx="8.7" cy="7" r="2.9" fill="#121620" stroke="#17a047" stroke-width="2"/></svg><div class="lt" style="left:812.9px;color:#17a047;letter-spacing:-0.15px">NVDA $165 PUT</div><svg class="li" style="left:970.9px" width="18" height="14" viewBox="0 0 18 14"><line x1="0" y1="7" x2="18" y2="7" stroke="#dc2d35" stroke-width="2"/><circle cx="8.7" cy="7" r="2.9" fill="#121620" stroke="#dc2d35" stroke-width="2"/></svg><div class="lt" style="left:993.6px;color:#dc2d35;letter-spacing:-0.35px">PLTR $145 PUT</div>
<div class="foot"><b>Normalized view:</b> Shows % change from entry price. For sell positions, the sign is inverted (positive = profit).</div>
<div class="fab"><svg width="50" height="50" viewBox="0 0 50 50" style="position:absolute;left:0;top:0">
<g stroke="#e5e7eb" stroke-width="1.8" fill="none"><line x1="19.6" y1="16.5" x2="19.6" y2="40"/><line x1="25.8" y1="16.5" x2="25.8" y2="40"/><line x1="31.8" y1="16.5" x2="31.8" y2="40"/></g>
<g stroke="#e5e7eb" stroke-width="1.8" fill="#2d3b50"><circle cx="19.6" cy="29" r="2.4"/><circle cx="25.8" cy="21" r="2.4"/><circle cx="31.8" cy="29" r="2.4"/></g>
</svg></div>
</body></html>
